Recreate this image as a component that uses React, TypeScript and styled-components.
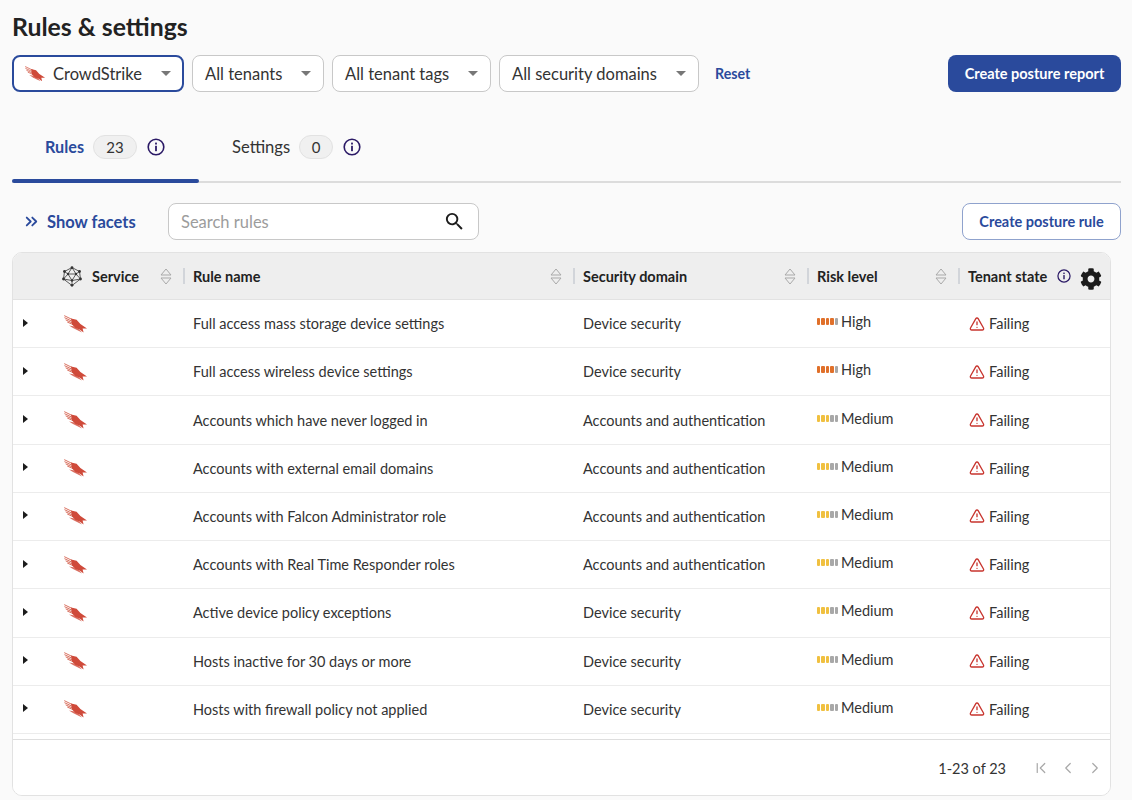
import React from 'react';
import styled, { createGlobalStyle } from 'styled-components';
import { ChevronFirst, ChevronLeft, ChevronRight, ChevronsRight, TriangleAlert } from 'lucide-react';
import { FaCog } from 'react-icons/fa';
import { MdSearch } from 'react-icons/md';

const GlobalStyle = createGlobalStyle`
  html, body {
    margin: 0;
    height: 100%;
    overflow: hidden;
    background: #fafafa;
  }
  body {
    font-family: Lato, "Open Sans", sans-serif;
    color: #222;
  }
`;

const rules = [
  { name: 'Full access mass storage device settings', domain: 'Device security', risk: 'High' },
  { name: 'Full access wireless device settings', domain: 'Device security', risk: 'High' },
  { name: 'Accounts which have never logged in', domain: 'Accounts and authentication', risk: 'Medium' },
  { name: 'Accounts with external email domains', domain: 'Accounts and authentication', risk: 'Medium' },
  { name: 'Accounts with Falcon Administrator role', domain: 'Accounts and authentication', risk: 'Medium' },
  { name: 'Accounts with Real Time Responder roles', domain: 'Accounts and authentication', risk: 'Medium' },
  { name: 'Active device policy exceptions', domain: 'Device security', risk: 'Medium' },
  { name: 'Hosts inactive for 30 days or more', domain: 'Device security', risk: 'Medium' },
  { name: 'Hosts with firewall policy not applied', domain: 'Device security', risk: 'Medium' },
];

const Falcon = ({ size = 24 }: { size?: number }) => (
  <svg width={size} height={size * 0.75} viewBox="0 0 24 18" fill="#cf4a3a">
    <g stroke="#d9705f" strokeWidth="1" strokeLinecap="round">
      <path d="M0.6 0.8 L10 5.4" />
      <path d="M0.8 2.8 L10 7.2" />
      <path d="M2 5 L10 8.8" />
      <path d="M3.6 7.2 L10 10" />
    </g>
    <path d="M7 3.4 L12.6 4.8 L16.4 9 L23 13.4 L18.6 13.4 L19.6 17.4 L15.6 14.6 L11.6 13 L8 9.6 Z" />
    <path d="M5 10.4 L11 11.4 L15 14.2 L18 17.4 L13 15 L9 13 Z" opacity="0.8" />
  </svg>
);

const InfoIcon = ({ size = 18 }: { size?: number }) => (
  <svg width={size} height={size} viewBox="0 0 18 18" fill="none">
    <circle cx="9" cy="9" r="7.8" stroke="#2b1a66" strokeWidth="1.6" />
    <rect x="8.1" y="7.8" width="1.8" height="5.4" fill="#2b1a66" />
    <rect x="8.1" y="4.6" width="1.8" height="1.9" fill="#2b1a66" />
  </svg>
);

const SortIcon = () => (
  <svg width="12" height="17" viewBox="0 0 12 17" fill="none" stroke="#a9a9a9" strokeWidth="1">
    <path d="M6 1 L11 7 H1 Z" />
    <path d="M6 16 L11 10 H1 Z" />
  </svg>
);

const MeshIcon = () => (
  <svg width="20" height="21" viewBox="0 0 20 21" fill="none" stroke="#333" strokeWidth="0.8">
    <path d="M10 1.5 L17.5 5.5 L18.5 13 L10 19.5 L1.5 13 L2.5 5.5 Z" />
    <path d="M10 1.5 L6 8 L2.5 5.5 M10 1.5 L14 8 L17.5 5.5 M6 8 H14 L10 14.5 Z" />
    <path d="M1.5 13 L10 14.5 L18.5 13 M6 8 L1.5 13 M14 8 L18.5 13 M10 14.5 V19.5" />
    <g fill="#333" stroke="none">
      <circle cx="10" cy="1.7" r="1.4" />
      <circle cx="17.5" cy="5.5" r="1.4" />
      <circle cx="18.5" cy="13" r="1.4" />
      <circle cx="10" cy="19.3" r="1.4" />
      <circle cx="1.5" cy="13" r="1.4" />
      <circle cx="2.5" cy="5.5" r="1.4" />
      <circle cx="6" cy="8" r="1.2" />
      <circle cx="14" cy="8" r="1.2" />
      <circle cx="10" cy="14.5" r="1.2" />
    </g>
  </svg>
);

const RiskMeter = ({ level }: { level: string }) => {
  const filled = level === 'High' ? 4 : 3;
  return (
    <Meter>
      {[0, 1, 2, 3, 4].map((i) => (
        <MeterBar key={i} $color={i >= filled ? '#a8a8a8' : level === 'High' ? '#e0702a' : '#f0c040'} />
      ))}
    </Meter>
  );
};

const Select = ({ label, width, focused, logo }: { label: string; width: number; focused?: boolean; logo?: boolean }) => (
  <SelectBox $width={width} $focused={focused}>
    {logo && <Falcon size={21} />}
    <SelectLabel>{label}</SelectLabel>
    <Caret />
  </SelectBox>
);

const HeaderCell = ({ label, icon }: { label: string; icon?: React.ReactNode }) => (
  <HeadCell>
    {icon}
    <HeadLabel>{label}</HeadLabel>
    <SortSlot>
      <SortIcon />
    </SortSlot>
    <Divider />
  </HeadCell>
);

export default function App() {
  return (
    <Page>
      <GlobalStyle />
      <Title>Rules &amp; settings</Title>
      <FilterBar>
        <Select label="CrowdStrike" width={172} focused logo />
        <Select label="All tenants" width={132} />
        <Select label="All tenant tags" width={159} />
        <Select label="All security domains" width={200} />
        <ResetLink>Reset</ResetLink>
        <PrimaryButton>Create posture report</PrimaryButton>
      </FilterBar>

      <Tabs>
        <Tab $active>
          <TabLabel $active>Rules</TabLabel>
          <Count $width={44}>23</Count>
          <InfoIcon />
        </Tab>
        <Tab>
          <TabLabel>Settings</TabLabel>
          <Count $width={34}>0</Count>
          <InfoIcon />
        </Tab>
      </Tabs>

      <Toolbar>
        <FacetsLink>
          <ChevronsRight size={19} strokeWidth={2.3} />
          Show facets
        </FacetsLink>
        <SearchBox>
          <SearchPlaceholder>Search rules</SearchPlaceholder>
          <MdSearch size={23} color="#1c1c1c" />
        </SearchBox>
        <SecondaryButton>Create posture rule</SecondaryButton>
      </Toolbar>

      <TableCard>
        <HeadRow>
          <ServiceHead>
            <HeaderCell label="Service" icon={<MeshIcon />} />
          </ServiceHead>
          <HeaderCell label="Rule name" />
          <HeaderCell label="Security domain" />
          <HeaderCell label="Risk level" />
          <TenantHead>
            <HeadLabel>Tenant state</HeadLabel>
            <InfoIcon size={14} />
            <FaCog size={22} color="#1c1c1c" />
          </TenantHead>
        </HeadRow>
        <Body>
          {rules.map((rule) => (
            <Row key={rule.name}>
              <ServiceCell>
                <Expander />
                <Falcon />
              </ServiceCell>
              <Cell>{rule.name}</Cell>
              <Cell>{rule.domain}</Cell>
              <RiskCell>
                <RiskMeter level={rule.risk} />
                {rule.risk}
              </RiskCell>
              <StateCell>
                <TriangleAlert size={16} color="#c8352e" strokeWidth={2} />
                Failing
              </StateCell>
            </Row>
          ))}
        </Body>
        <Footer>
          <PageCount>1-23 of 23</PageCount>
          <Pager>
            <ChevronFirst size={18} strokeWidth={1.6} />
            <ChevronLeft size={18} strokeWidth={1.6} />
            <ChevronRight size={18} strokeWidth={1.6} />
          </Pager>
        </Footer>
      </TableCard>
    </Page>
  );
}

const Page = styled.div`
  width: 1132px;
  height: 800px;
  padding: 12px 11px 4px 12px;
  box-sizing: border-box;
  display: flex;
  flex-direction: column;
  overflow: hidden;
`;

const Title = styled.h1`
  margin: 0;
  font-size: 24.8px;
  line-height: 30px;
  font-weight: 700;
  color: #222;
`;

const FilterBar = styled.div`
  display: flex;
  align-items: center;
  gap: 8px;
  margin-top: 13px;
  height: 37px;
`;

const SelectBox = styled.div<{ $width: number; $focused?: boolean }>`
  width: ${(p) => p.$width}px;
  height: 37px;
  box-sizing: border-box;
  display: flex;
  align-items: center;
  gap: 7px;
  padding: 0 ${(p) => (p.$focused ? 11 : 12)}px;
  background: #fff;
  border-radius: 8px;
  border: ${(p) => (p.$focused ? '2px solid #2a4a9c' : '1px solid #c8c8c8')};
`;

const SelectLabel = styled.span`
  flex: 1;
  font-size: 16.5px;
  color: #333;
  white-space: nowrap;
`;

const Caret = styled.span`
  width: 0;
  height: 0;
  border-left: 5px solid transparent;
  border-right: 5px solid transparent;
  border-top: 5px solid #777;
`;

const ResetLink = styled.a`
  margin-left: 8px;
  font-size: 14.2px;
  font-weight: 700;
  color: #2a4a9c;
`;

const PrimaryButton = styled.button`
  margin-left: auto;
  width: 173px;
  height: 37px;
  border: none;
  border-radius: 8px;
  background: #2a4a9c;
  color: #fff;
  font-family: inherit;
  font-size: 14.5px;
  font-weight: 700;
`;

const Tabs = styled.div`
  display: flex;
  height: 71px;
  margin-top: 18px;
  border-bottom: 2px solid #dcdcdc;
`;

const Tab = styled.div<{ $active?: boolean }>`
  position: relative;
  width: 187px;
  box-sizing: border-box;
  display: flex;
  align-items: center;
  gap: 9px;
  padding: 2px 0 0 33px;

  ${(p) =>
    p.$active &&
    `
    &::after {
      content: '';
      position: absolute;
      left: 0;
      right: 0;
      bottom: -2px;
      height: 4px;
      border-radius: 2px;
      background: #2a4a9c;
    }
  `}
`;

const TabLabel = styled.span<{ $active?: boolean }>`
  font-size: ${(p) => (p.$active ? 16.2 : 16.6)}px;
  font-weight: ${(p) => (p.$active ? 700 : 400)};
  color: ${(p) => (p.$active ? '#2a4a9c' : '#333')};
`;

const Count = styled.span<{ $width: number }>`
  width: ${(p) => p.$width}px;
  height: 24px;
  margin-right: 1px;
  box-sizing: border-box;
  display: flex;
  align-items: center;
  justify-content: center;
  border: 1px solid #e2e2e2;
  border-radius: 12px;
  background: #f0f0f0;
  font-size: 15px;
  color: #333;
`;

const Toolbar = styled.div`
  display: flex;
  align-items: center;
  height: 37px;
  margin-top: 20px;
`;

const FacetsLink = styled.a`
  display: flex;
  align-items: center;
  gap: 6px;
  width: 156px;
  padding-left: 10px;
  box-sizing: border-box;
  font-size: 16.5px;
  font-weight: 700;
  color: #2a4a9c;
`;

const SearchBox = styled.div`
  width: 311px;
  height: 37px;
  box-sizing: border-box;
  display: flex;
  align-items: center;
  justify-content: space-between;
  padding: 0 12px 0 12px;
  background: #fff;
  border: 1px solid #c8c8c8;
  border-radius: 8px;
`;

const SearchPlaceholder = styled.span`
  font-size: 16.5px;
  color: #9c9c9c;
`;

const SecondaryButton = styled.button`
  margin-left: auto;
  width: 159px;
  height: 37px;
  border: 1px solid #8fa2cd;
  border-radius: 8px;
  background: #fff;
  color: #2a4a9c;
  font-family: inherit;
  font-size: 14.5px;
  font-weight: 700;
`;

const columns = '171px 390px 234px 151px 1fr';

const TableCard = styled.div`
  width: 1099px;
  height: 544px;
  margin-top: 12px;
  box-sizing: border-box;
  display: flex;
  flex-direction: column;
  background: #fff;
  border: 1px solid #e2e2e2;
  border-radius: 10px;
  overflow: hidden;
`;

const HeadRow = styled.div`
  flex: none;
  display: grid;
  grid-template-columns: ${columns};
  height: 47px;
  background: #eeeeee;
  border-bottom: 1px solid #e2e2e2;
  box-sizing: border-box;
`;

const HeadCell = styled.div`
  position: relative;
  display: flex;
  align-items: center;
  padding-left: 9px;
  min-width: 0;
  height: 100%;
`;

const ServiceHead = styled.div`
  padding-left: 40px;

  ${HeadCell} {
    padding-left: 9px;
    gap: 10px;
  }
`;

const HeadLabel = styled.span`
  font-size: 14.5px;
  font-weight: 700;
  color: #222;
  white-space: nowrap;
`;

const SortSlot = styled.span`
  position: absolute;
  right: 12px;
  top: 15px;
  line-height: 0;
`;

const Divider = styled.span`
  position: absolute;
  right: -1px;
  top: 15px;
  width: 2px;
  height: 16px;
  background: #d2d5da;
`;

const TenantHead = styled.div`
  display: flex;
  align-items: center;
  padding-left: 9px;

  svg:first-of-type {
    margin-left: 10px;
  }

  svg:last-of-type {
    margin-left: 9px;
    margin-top: 5px;
  }
`;

const Body = styled.div`
  flex: 1;
  min-height: 0;
  overflow: hidden;
`;

const Row = styled.div`
  display: grid;
  grid-template-columns: ${columns};
  height: 48.22px;
  box-sizing: border-box;
  border-bottom: 1px solid #ececec;
  align-items: center;
  font-size: 14.5px;
  color: #333;
`;

const Cell = styled.div`
  padding-left: 9px;
  white-space: nowrap;
  font-size: 14.5px;
`;

const ServiceCell = styled.div`
  display: flex;
  align-items: center;
  padding-left: 10px;
  gap: 36px;
`;

const Expander = styled.span`
  width: 0;
  height: 0;
  margin-bottom: 2px;
  border-top: 4px solid transparent;
  border-bottom: 4px solid transparent;
  border-left: 5px solid #1c1c1c;
`;

const RiskCell = styled(Cell)`
  display: flex;
  align-items: center;
  gap: 3px;
  padding-bottom: 4px;
`;

const Meter = styled.span`
  display: flex;
  gap: 1px;
  width: 21px;
`;

const MeterBar = styled.i<{ $color: string }>`
  width: 3.4px;
  height: 7px;
  border-radius: 1px;
  background: ${(p) => p.$color};
`;

const StateCell = styled(Cell)`
  display: flex;
  align-items: center;
  gap: 4px;
  padding-left: 10px;
`;

const Footer = styled.div`
  flex: none;
  height: 56px;
  box-sizing: border-box;
  display: flex;
  align-items: center;
  justify-content: flex-end;
  padding: 1px 6px 0 0;
  border-top: 1px solid #dedede;
  background: #fff;
`;

const PageCount = styled.span`
  font-size: 14.5px;
  color: #333;
`;

const Pager = styled.div`
  display: flex;
  align-items: center;
  gap: 9px;
  margin-left: 26px;
  color: #a8a8a8;
`;
